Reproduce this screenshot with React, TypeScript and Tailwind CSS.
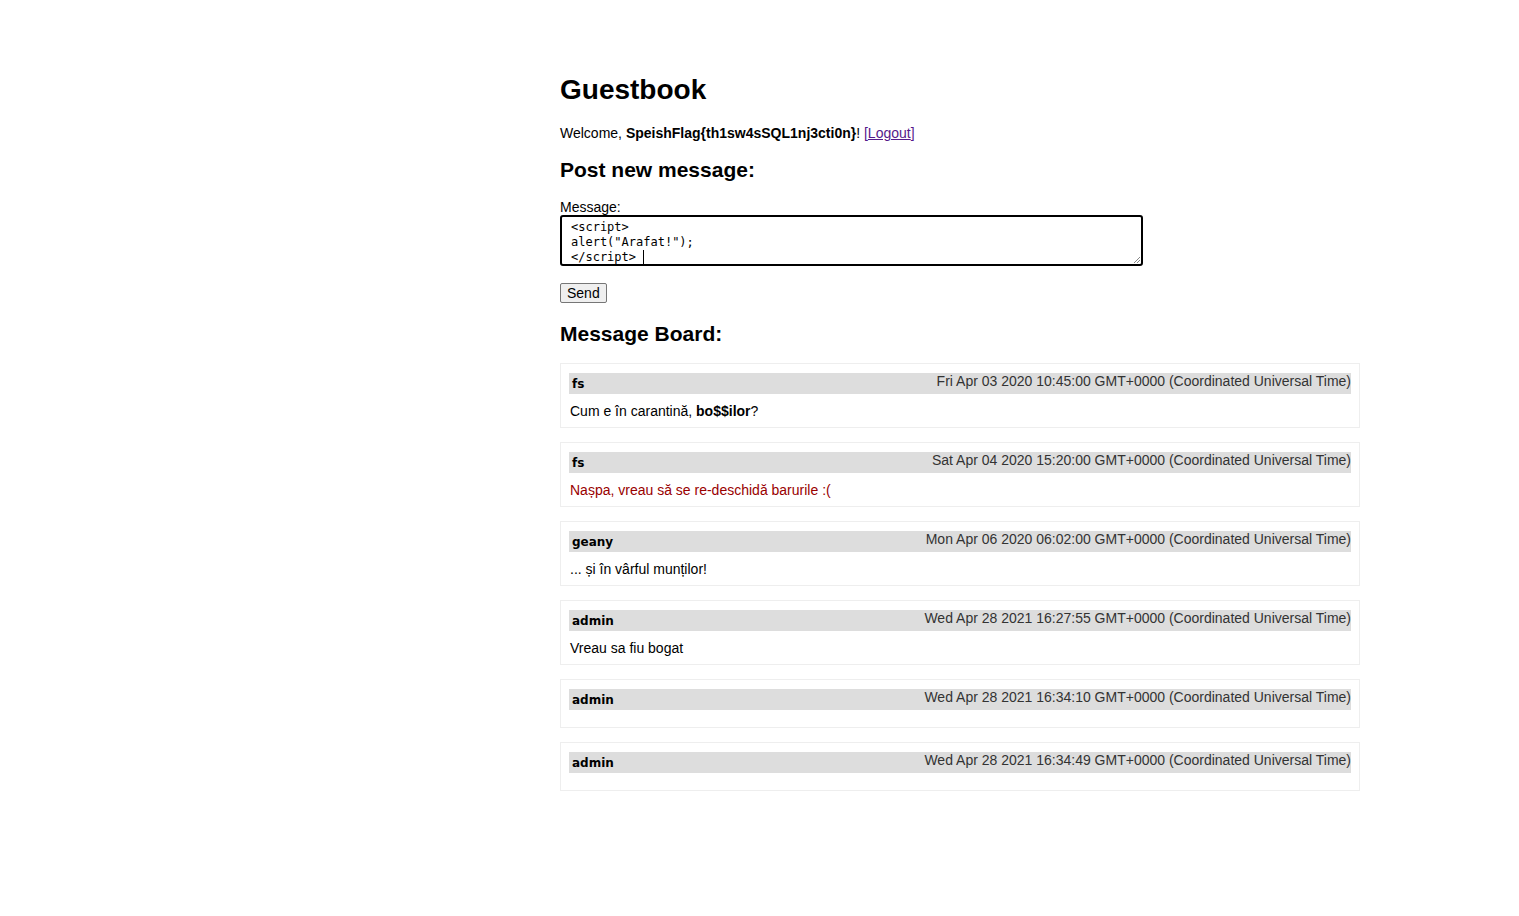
import React from "react";

type Post = {
  user: string;
  date: string;
  body?: React.ReactNode;
};

const posts: Post[] = [
  {
    user: "fs",
    date: "Fri Apr 03 2020 10:45:00 GMT+0000 (Coordinated Universal Time)",
    body: (
      <>
        Cum e în carantină, <b>bo$$ilor</b>?
      </>
    ),
  },
  {
    user: "fs",
    date: "Sat Apr 04 2020 15:20:00 GMT+0000 (Coordinated Universal Time)",
    body: <span className="text-[#990000]">Nașpa, vreau să se re-deschidă barurile :(</span>,
  },
  {
    user: "geany",
    date: "Mon Apr 06 2020 06:02:00 GMT+0000 (Coordinated Universal Time)",
    body: "... și în vârful munților!",
  },
  {
    user: "admin",
    date: "Wed Apr 28 2021 16:27:55 GMT+0000 (Coordinated Universal Time)",
    body: "Vreau sa fiu bogat",
  },
  {
    user: "admin",
    date: "Wed Apr 28 2021 16:34:10 GMT+0000 (Coordinated Universal Time)",
  },
  {
    user: "admin",
    date: "Wed Apr 28 2021 16:34:49 GMT+0000 (Coordinated Universal Time)",
  },
];

function PostCard({ post }: { post: Post }) {
  return (
    <div className="border border-[#eeeeee] px-2 pb-[8px] pt-[9px]">
      <div className="flex h-[21px] justify-between bg-[#dddddd]">
        <b className="pl-[3px] pt-[3px] font-['DejaVu_Sans',sans-serif] text-[12px] leading-[16px] text-black">
          {post.user}
        </b>
        <span className="leading-[16px] text-[#333333]">{post.date}</span>
      </div>
      <div className="mt-[9px] pl-px leading-[16px]">{post.body}</div>
    </div>
  );
}

export default function App() {
  return (
    <div className="min-h-screen bg-white font-['Liberation_Sans',Arial,sans-serif] text-[14px] text-black">
      <div className="ml-[560px] w-[800px] pt-[74px]">
        <h1 className="text-[28px] font-bold leading-[32px]">Guestbook</h1>

        <p className="mt-[19px] leading-[16px]">
          Welcome, <b>SpeishFlag{"{"}th1sw4sSQL1nj3cti0n{"}"}</b>!{" "}
          <span className="text-[#551a8b]">
            [<a href="#" className="underline">Logout</a>]
          </span>
        </p>

        <h2 className="mt-[17px] text-[21px] font-bold leading-[24px]">Post new message:</h2>

        {/* message form */}
        <div className="mt-[17px]">
          <label className="block leading-[16px]">Message:</label>
          <div className="relative h-[51px] w-[583px] rounded-[3px] border-2 border-black px-[9px] pt-[3px]">
            <div className="whitespace-pre font-['DejaVu_Sans_Mono',monospace] text-[12px] leading-[15px] text-black">
              {"<script>\nalert(\"Arafat!\");\n</script> "}
              <span className="border-l border-black" />
            </div>
            <svg className="absolute bottom-0 right-0" width="9" height="9" viewBox="0 0 9 9">
              <path d="M8 2 L2 8 M8 5 L5 8" stroke="#888" strokeWidth="1" />
            </svg>
          </div>
          <button className="mt-[17px] h-[20px] rounded-[2px] border border-[#767676] bg-[#efefef] px-[6px] text-[14px] leading-[16px]">
            Send
          </button>
        </div>

        <h2 className="mt-[18px] text-[21px] font-bold leading-[24px]">Message Board:</h2>

        <div className="mt-[17px] flex flex-col gap-[14px]">
          {posts.map((post, i) => (
            <PostCard key={i} post={post} />
          ))}
        </div>
      </div>
    </div>
  );
}
